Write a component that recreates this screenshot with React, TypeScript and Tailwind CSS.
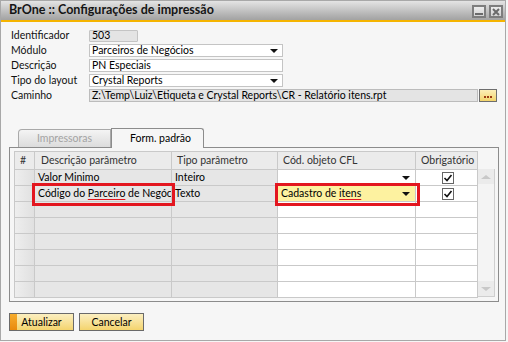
import React from "react";

const Arrow = () => (
  <div className="w-0 h-0 border-x-[4px] border-x-transparent border-t-[4px] border-t-[#111]" />
);

const Check = () => (
  <div className="w-[12px] h-[12px] border border-[#666] bg-white flex items-center justify-center">
    <svg width="10" height="10" viewBox="0 0 10 10">
      <path d="M1.5 5 L4 7.5 L8.5 2" stroke="#111" strokeWidth="1.6" fill="none" />
    </svg>
  </div>
);

function FormRow({ label, children }: { label: string; children: React.ReactNode }) {
  return (
    <div className="flex h-[15px] items-center">
      <div className="w-[79px] text-[#111] leading-none pl-[1px]">{label}</div>
      {children}
    </div>
  );
}

const cols = "grid grid-cols-[20px_137px_106px_138px_62px]";

export default function App() {
  const headCell = "h-[18px] border-r border-b border-[#c9c9c9] bg-[#ebebeb] text-[#333] flex items-center pl-[5px]";
  const gray = "h-[16px] border-r border-b border-[#c9c9c9] bg-[#e6e6e6] flex items-center pl-[3px]";
  const white = "h-[16px] border-r border-b border-[#c9c9c9] bg-white flex items-center pl-[3px]";
  const num = "h-[16px] border-r border-b border-[#c9c9c9] bg-gradient-to-r from-[#eeeeee] to-[#e0e0e0]";
  const emptyRows = [0, 1, 2, 3, 4, 5];
  return (
    <div className="w-[508px] h-[342px] bg-[#f6f6f6] font-['Lato','Liberation_Sans',sans-serif] text-[10.5px] text-black">
      <div className="w-[506px] h-[341px] border border-[#a8a8a8] bg-[#f6f6f6] flex flex-col">
        {/* Title bar */}
        <div className="h-[19px] bg-gradient-to-b from-[#e4e4e4] to-[#a2a2a2] flex items-center justify-between pl-[8px] pr-[2px]">
          <span className="text-[12.5px] font-bold text-[#151515] leading-none">BrOne :: Configurações de impressão</span>
          <div className="flex gap-[3px] mt-[2px]">
            <div className="w-[14px] h-[13px] border-2 border-[#7d7d7d] bg-gradient-to-b from-[#ececec] to-[#d2d2d2] flex items-end justify-center pb-[1px]">
              <div className="w-[8px] h-[2px] bg-[#6a6a6a]" />
            </div>
            <div className="w-[14px] h-[13px] border-2 border-[#7d7d7d] bg-gradient-to-b from-[#ececec] to-[#d2d2d2] flex items-center justify-center">
              <svg width="8" height="8" viewBox="0 0 8 8">
                <path d="M1 1 L7 7 M7 1 L1 7" stroke="#6a6a6a" strokeWidth="2" />
              </svg>
            </div>
          </div>
        </div>
        <div className="h-[2px] bg-[#f5b400]" />

        {/* Form */}
        <div className="mt-[6px] pl-[9px] flex flex-col">
          <FormRow label="Identificador">
            <div className="w-[49px] h-[12px] border border-[#c4c4c4] bg-[#e4e4e4] rounded-[1px] flex items-center pl-[2px] leading-none">503</div>
          </FormRow>
          <FormRow label="Módulo">
            <div className="w-[194px] h-[13px] border border-[#c4c4c4] bg-white flex items-center justify-between pl-[2px] pr-[4px] leading-none">
              <span>Parceiros de Negócios</span>
              <Arrow />
            </div>
          </FormRow>
          <FormRow label="Descrição">
            <div className="w-[194px] h-[13px] border border-[#c4c4c4] bg-white flex items-center pl-[2px] leading-none">PN Especiais</div>
          </FormRow>
          <FormRow label="Tipo do layout">
            <div className="w-[194px] h-[13px] border border-[#c4c4c4] bg-white flex items-center justify-between pl-[2px] pr-[4px] leading-none">
              <span>Crystal Reports</span>
              <Arrow />
            </div>
          </FormRow>
          <FormRow label="Caminho">
            <div className="w-[389px] h-[13px] border border-[#bcbcbc] bg-[#e4e4e4] flex items-center pl-[2px] leading-none">
              Z:\Temp\Luiz\Etiqueta e Crystal Reports\CR - Relatório itens.rpt
            </div>
            <div className="ml-[1px] w-[18px] h-[13px] border border-[#6e6e6e] bg-gradient-to-b from-[#fcefb8] to-[#f3d46a] flex items-end justify-center gap-[1px] pb-[3px]">
              <div className="w-[2px] h-[2px] bg-[#9c3c14]" />
              <div className="w-[2px] h-[2px] bg-[#9c3c14]" />
              <div className="w-[2px] h-[2px] bg-[#9c3c14]" />
            </div>
          </FormRow>
        </div>

        {/* Tabs */}
        <div className="mt-[25px] ml-[8px] w-[490px] flex flex-col">
          <div className="flex pl-[9px] h-[19px] items-end">
            <div className="w-[93px] h-[18px] border border-b-0 border-[#a9a9a9] rounded-tl-[4px] bg-gradient-to-b from-[#f4f4f4] to-[#dcdcdc] flex items-center justify-center text-[#a3a3a3] leading-none">
              Impressoras
            </div>
            <div className="w-[93px] h-[20px] -mb-px relative z-10 border border-b-0 border-[#8c8c8c] rounded-tr-[3px] bg-[#f6f6f6] flex items-center justify-center pl-[6px] leading-none">
              Form. padrão
            </div>
          </div>
          <div className="h-[155px] border border-[#8c8c8c] bg-[#f6f6f6] pl-[4px] pt-[3px] flex items-start">
            <div className="relative w-[464px] border-l border-t border-[#c9c9c9]">
              <div className={cols}>
                <div className={headCell}>#</div>
                <div className={`${headCell} pl-[6px]`}>Descrição parâmetro</div>
                <div className={headCell}>Tipo parâmetro</div>
                <div className={headCell}>Cód. objeto CFL</div>
                <div className={headCell}>Obrigatório</div>

                <div className={num} />
                <div className={gray}>Valor Minimo</div>
                <div className={gray}>Inteiro</div>
                <div className={`${white} justify-between pr-[5px]`}>
                  <span />
                  <Arrow />
                </div>
                <div className={`${white} justify-center pl-0`}>
                  <Check />
                </div>

                <div className={num} />
                <div className={`${gray} whitespace-nowrap overflow-hidden`}>
                  <span>
                    Código do{" "}
                    <span className="underline decoration-[#e0161e] decoration-1 underline-offset-[2px]">Parceiro</span> de
                    Negóc
                  </span>
                </div>
                <div className={gray}>Texto</div>
                <div className={`h-[16px] border-r border-b border-[#c9c9c9] bg-[#fdf2a0] flex items-center justify-between pl-[3px] pr-[5px]`}>
                  <span>
                    Cadastro de{" "}
                    <span className="underline decoration-[#e0161e] decoration-1 underline-offset-[2px]">itens</span>
                  </span>
                  <Arrow />
                </div>
                <div className={`${white} justify-center pl-0`}>
                  <Check />
                </div>

                {emptyRows.map((r) => (
                  <React.Fragment key={r}>
                    <div className={num} />
                    <div className={gray} />
                    <div className={gray} />
                    <div className={white} />
                    <div className={white} />
                  </React.Fragment>
                ))}
              </div>
              <div className="absolute left-[17px] top-[31px] w-[143px] h-[23px] border-[3px] border-[#e3161f]" />
              <div className="absolute left-[260px] top-[31px] w-[145px] h-[23px] border-[3px] border-[#e3161f]" />
            </div>
            {/* scrollbar */}
            <div className="mt-[18px] w-[17px] h-[128px] border-r border-b border-[#cfcfcf] bg-[#f4f4f4] flex flex-col justify-between">
              <div className="h-[15px] bg-[#ebebeb] flex items-center justify-center">
                <div className="w-0 h-0 border-x-[5px] border-x-transparent border-b-[4px] border-b-[#c8c8c8]" />
              </div>
              <div className="h-[15px] bg-[#ebebeb] flex items-center justify-center">
                <div className="w-0 h-0 border-x-[5px] border-x-transparent border-t-[4px] border-t-[#c8c8c8]" />
              </div>
            </div>
          </div>
        </div>

        {/* Buttons */}
        <div className="mt-[11px] ml-[8px] flex gap-[5px]">
          <div className="relative w-[65px] h-[18px] border border-[#6a6a6a] bg-gradient-to-b from-[#fcefc0] to-[#f4d46c] flex items-center justify-center leading-none">
            <div className="absolute left-0 top-0 bottom-0 w-[7px] bg-gradient-to-b from-[#f6ac2c] to-[#e98a0c]" />
            <span className="relative">Atualizar</span>
          </div>
          <div className="w-[65px] h-[18px] border border-[#6a6a6a] bg-gradient-to-b from-[#fcefc0] to-[#f4d46c] flex items-center justify-center leading-none">
            Cancelar
          </div>
        </div>
      </div>
    </div>
  );
}
